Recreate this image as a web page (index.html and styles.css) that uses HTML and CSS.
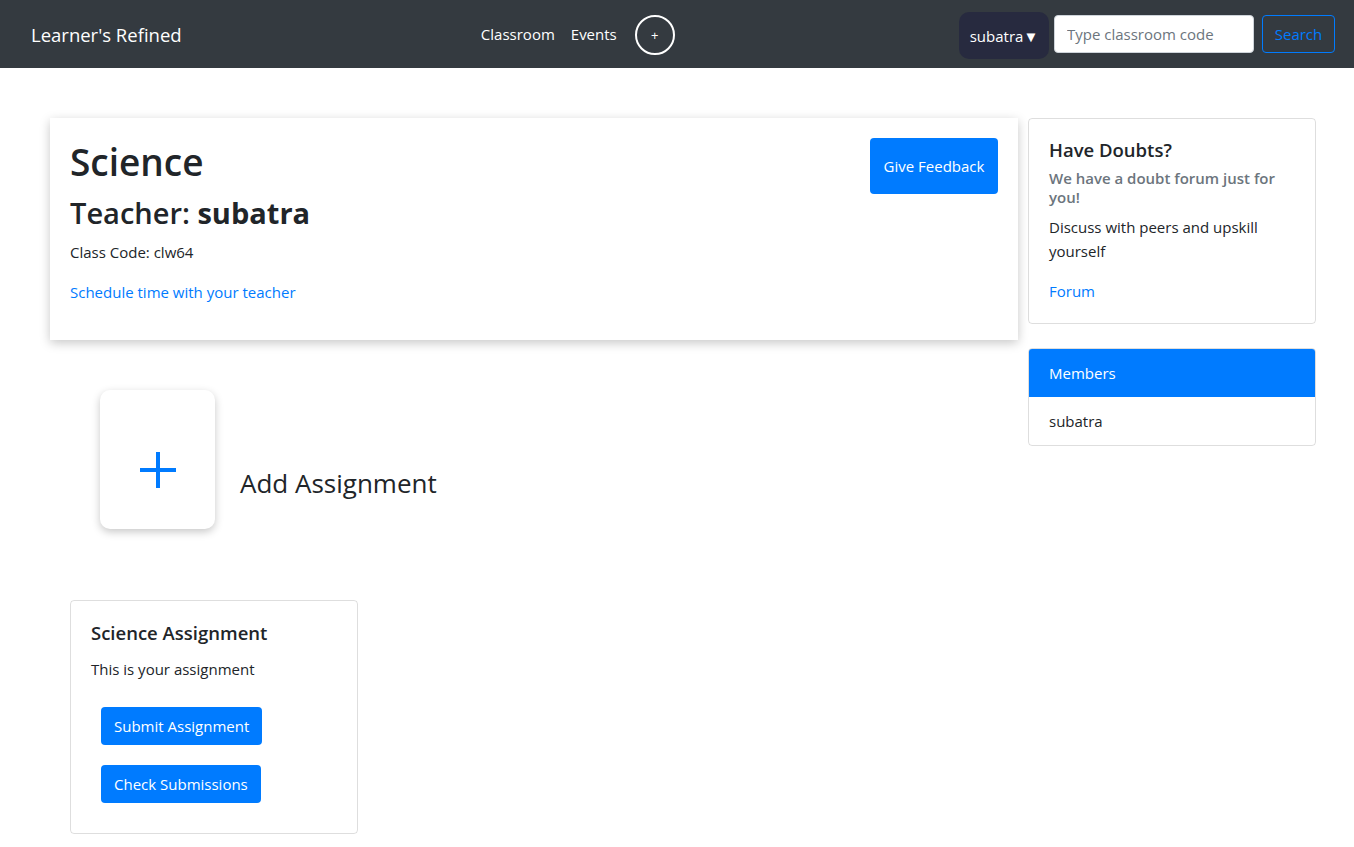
FILE: index.html
```html
<!DOCTYPE html>
<html lang="en">
<head>
<meta charset="utf-8">
<title>Learner's Refined</title>
<link rel="stylesheet" href="styles.css">
</head>
<body>
<nav class="navbar">
  <a class="brand" href="#">Learner's Refined</a>
  <ul class="nav">
    <li><a class="nav-link" href="#">Classroom</a></li>
    <li><a class="nav-link" href="#">Events</a></li>
    <li><button class="circle-btn">+</button></li>
  </ul>
  <div class="nav-right">
    <button class="user-btn">subatra▼</button>
    <input class="code-input" type="text" placeholder="Type classroom code">
    <button class="btn-outline">Search</button>
  </div>
</nav>

<div class="page">
  <div class="main-col">
    <div class="class-card">
      <button class="btn btn-feedback">Give Feedback</button>
      <h1 class="class-title">Science</h1>
      <h2 class="teacher">Teacher: <b>subatra</b></h2>
      <p class="code">Class Code: clw64</p>
      <p class="code"><a href="#" class="link">Schedule time with your teacher</a></p>
    </div>

    <div class="add-row">
      <div class="add-box">
        <svg width="38" height="38" viewBox="0 0 38 38" aria-hidden="true">
          <path d="M19 1V37M1 19H37" stroke="#007bff" stroke-width="4" fill="none"/>
        </svg>
      </div>
      <span class="add-label">Add Assignment</span>
    </div>

    <div class="assign-card">
      <h5 class="card-title">Science Assignment</h5>
      <p class="card-text">This is your assignment</p>
      <div class="assign-actions">
        <button class="btn btn-small">Submit Assignment</button>
        <button class="btn btn-small">Check Submissions</button>
      </div>
    </div>
  </div>

  <aside class="side-col">
    <div class="side-card">
      <h5 class="card-title">Have Doubts?</h5>
      <h6 class="card-subtitle">We have a doubt forum just for you!</h6>
      <p class="card-text side-text">Discuss with peers and upskill yourself</p>
      <a href="#" class="link">Forum</a>
    </div>

    <div class="members">
      <div class="members-head">Members</div>
      <div class="members-item">subatra</div>
    </div>
  </aside>
</div>
</body>
</html>
```

FILE: styles.css
```css
* { box-sizing: border-box; }

body {
  margin: 0;
  font-family: "Segoe UI", "Open Sans", "Noto Sans", sans-serif;
  font-size: 16px;
  line-height: 1.5;
  color: #212529;
  background: #fff;
}

h1, h2, h5, h6, p { margin: 0; }

.link { color: #007bff; text-decoration: none; }

/* navbar */
.navbar {
  height: 68px;
  background: #343a40;
  display: flex;
  align-items: center;
  padding: 0 19px 0 31px;
}
.brand {
  color: #fff;
  text-decoration: none;
  font-size: 18.5px;
  line-height: 30px;
  margin-right: 16px;
  margin-top: 2px;
}
.nav {
  list-style: none;
  margin: 0 auto;
  padding: 0 9px 0 0;
  display: flex;
  align-items: center;
}
.nav-link {
  display: block;
  color: #fff;
  text-decoration: none;
  padding: 8px 8px;
  font-size: 15px;
}
.circle-btn {
  margin-left: 10px;
  width: 40px;
  height: 40px;
  border: 2px solid #fff;
  border-radius: 50%;
  background: transparent;
  color: #fff;
  font-family: inherit;
  font-size: 13px;
  padding: 0;
  margin-top: 1px;
}
.nav-right {
  display: flex;
  align-items: center;
}
.user-btn {
  height: 47px;
  width: 90px;
  padding: 0 10px;
  border: none;
  border-radius: 10px;
  background: #272a3f;
  color: #fff;
  font-family: inherit;
  font-size: 15px;
  margin-right: 5px;
  margin-top: 3px;
  white-space: nowrap;
}
.code-input {
  width: 200px;
  height: 38px;
  border: 1px solid #ced4da;
  border-radius: 4px;
  padding: 6px 12px;
  font-family: inherit;
  font-size: 15px;
  color: #495057;
  margin-right: 8px;
}
.code-input::placeholder { color: #6c757d; }
.btn-outline {
  height: 38px;
  width: 73px;
  border: 1px solid #007bff;
  border-radius: 4px;
  background: transparent;
  color: #007bff;
  font-family: inherit;
  font-size: 15px;
  padding: 0;
}

/* page */
.page {
  display: flex;
  align-items: flex-start;
  padding: 50px 0 0 50px;
  gap: 10px;
}
.main-col { width: 968px; }
.side-col { width: 288px; }

.class-card {
  background: #fff;
  padding: 20px;
  box-shadow: 0 3px 10px rgba(0, 0, 0, 0.22);
  height: 222px;
}
.btn {
  border: none;
  background: #007bff;
  color: #fff;
  font-family: inherit;
  font-size: 15px;
  line-height: 24px;
  border-radius: 4px;
  white-space: nowrap;
}
.btn-feedback {
  float: right;
  width: 128px;
  height: 56px;
  padding: 0;
}
.class-title {
  font-size: 37px;
  font-weight: 600;
  line-height: 48px;
  margin-bottom: 8px;
}
.teacher {
  font-size: 29px;
  font-weight: 600;
  line-height: 38px;
  margin-bottom: 8px;
}
.teacher b { font-weight: 700; }
.code {
  font-size: 15px;
  line-height: 24px;
  margin-bottom: 16px;
}

.add-row {
  display: flex;
  align-items: flex-start;
  margin: 50px 0 0 50px;
}
.add-box {
  width: 115px;
  height: 139px;
  border-radius: 10px;
  background: #fff;
  box-shadow: 0 3px 8px rgba(0, 0, 0, 0.22);
  display: flex;
  justify-content: center;
  padding-top: 61px;
}
.add-label {
  margin: 75px 0 0 25px;
  font-size: 26px;
  line-height: 36px;
  font-weight: 400;
}

.assign-card {
  margin: 71px 0 0 20px;
  width: 288px;
  border: 1px solid rgba(0, 0, 0, 0.13);
  border-radius: 4px;
  padding: 20px;
}
.card-title {
  font-size: 18.5px;
  font-weight: 600;
  line-height: 24px;
  margin-bottom: 12px;
}
.card-text {
  font-size: 15px;
  line-height: 24px;
  margin-bottom: 16px;
}
.assign-actions {
  display: flex;
  flex-direction: column;
  align-items: flex-start;
  gap: 20px;
  padding: 10px;
}
.btn-small {
  height: 38px;
  padding: 0 13px;
}

.side-card {
  border: 1px solid rgba(0, 0, 0, 0.13);
  border-radius: 4px;
  padding: 19px 20px 20px;
}
.card-subtitle {
  margin-top: -5px;
  margin-bottom: 8px;
  font-size: 15px;
  font-weight: 600;
  line-height: 19px;
  color: #6c757d;
}
.side-text { margin-bottom: 16px; }
.side-card .link { font-size: 15px; line-height: 24px; display: block; }

.members {
  margin-top: 24px;
  border: 1px solid rgba(0, 0, 0, 0.13);
  border-radius: 4px;
  overflow: hidden;
}
.members-head {
  background: #007bff;
  color: #fff;
  padding: 12px 20px;
  font-size: 15px;
  line-height: 24px;
}
.members-item {
  padding: 12px 20px;
  font-size: 15px;
  line-height: 24px;
}
```
